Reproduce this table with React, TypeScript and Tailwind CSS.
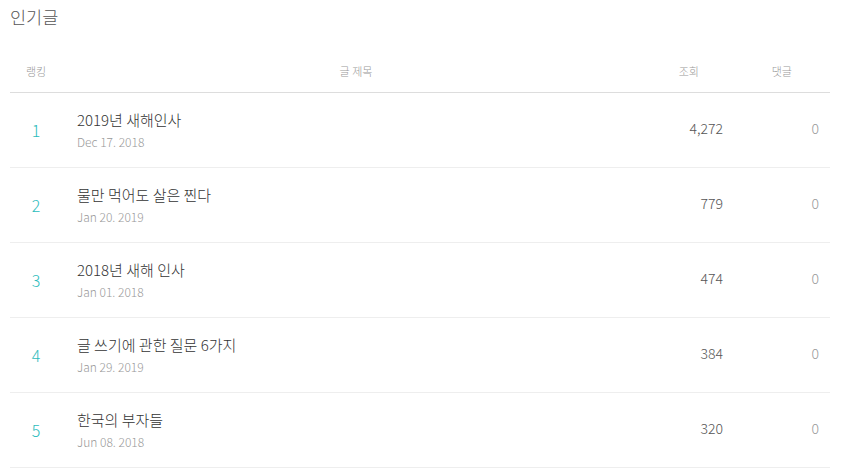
import React from "react";

const rows = [
  { rank: 1, title: "2019년 새해인사", date: "Dec 17. 2018", views: "4,272", comments: 0 },
  { rank: 2, title: "물만 먹어도 살은 찐다", date: "Jan 20. 2019", views: "779", comments: 0 },
  { rank: 3, title: "2018년 새해 인사", date: "Jan 01. 2018", views: "474", comments: 0 },
  { rank: 4, title: "글 쓰기에 관한 질문 6가지", date: "Jan 29. 2019", views: "384", comments: 0 },
  { rank: 5, title: "한국의 부자들", date: "Jun 08. 2018", views: "320", comments: 0 },
];

export default function App() {
  return (
    <div
      className="w-[860px] h-[472px] bg-white overflow-hidden"
      style={{ fontFamily: '"Noto Sans CJK KR", "Noto Sans", sans-serif' }}
    >
      <div className="pl-[10px] pr-[30px]">
        {/* Section title */}
        <h2 className="text-[17.5px] font-light text-[#555] leading-[24px] pt-[5px]">인기글</h2>

        {/* Header */}
        <div className="mt-[29px] flex items-start h-[35px] pt-[5px] border-b border-[#ddd] text-[11px] leading-[16px] font-light text-[#999]">
          <div className="w-[52px] text-center">랭킹</div>
          <div className="flex-1 text-center pl-[11px]">글 제목</div>
          <div className="w-[98px] text-right pr-[38px]">조회</div>
          <div className="w-[93px] text-right pr-[38px]">댓글</div>
        </div>

        {/* Rows */}
        {rows.map((r) => (
          <div key={r.rank} className="flex items-center h-[75px] border-b border-[#eee]">
            <div className="w-[52px] text-center text-[16px] font-light text-[#2cbcbc] pb-[1px]">{r.rank}</div>
            <div className="flex-1 pl-[15px]">
              <div className="text-[15px] font-light text-[#333] leading-[20px]">{r.title}</div>
              <div className="text-[12px] font-light text-[#999] leading-[16px] mt-[4px]">{r.date}</div>
            </div>
            <div className="w-[80px] text-right text-[14px] font-light text-[#555] pb-[3px]">{r.views}</div>
            <div className="w-[107px] text-right text-[14px] font-light text-[#999] pr-[11px] pb-[3px]">{r.comments}</div>
          </div>
        ))}
      </div>
    </div>
  );
}
